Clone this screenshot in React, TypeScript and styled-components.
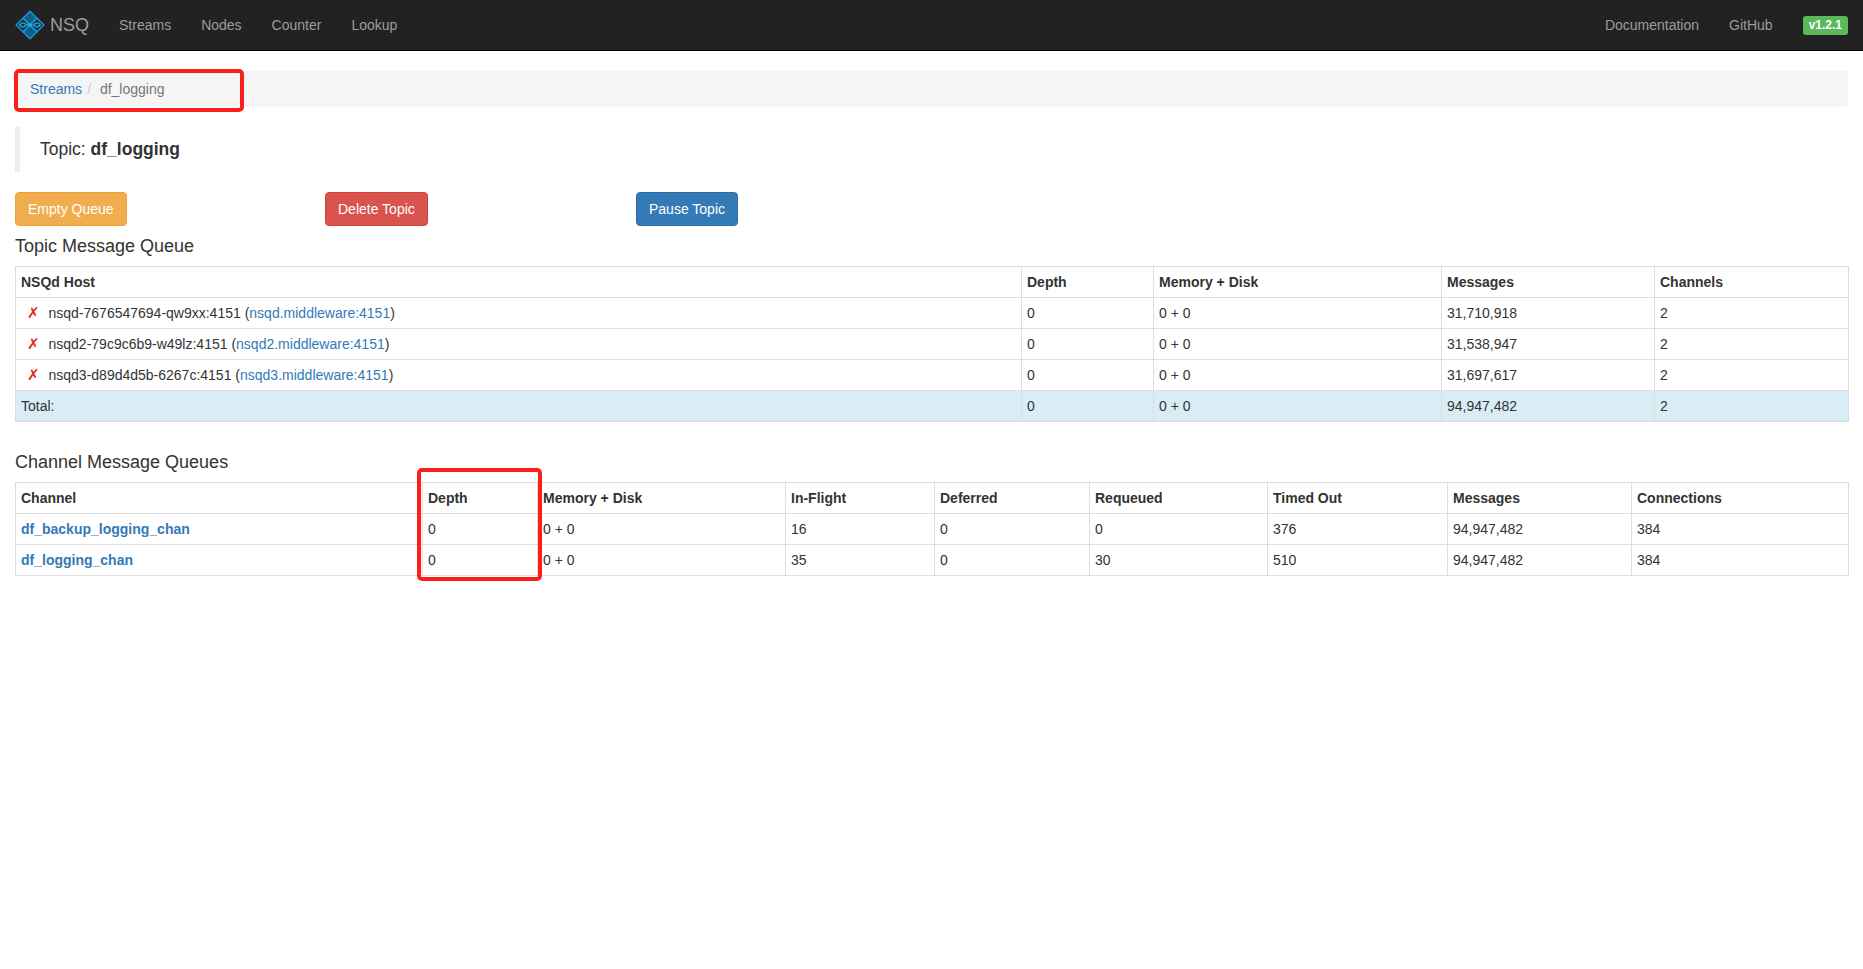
import styled, { createGlobalStyle } from "styled-components";

const GlobalStyle = createGlobalStyle`
  * {
    box-sizing: border-box;
  }
  body {
    margin: 0;
    background: #fff;
    color: #333;
    font-family: "Liberation Sans", Arial, sans-serif;
    font-size: 14px;
    line-height: 20px;
  }
`;

const Page = styled.div`
  position: relative;
  min-height: 969px;
`;

const Navbar = styled.nav`
  display: flex;
  justify-content: space-between;
  height: 51px;
  margin-bottom: 20px;
  padding: 0 15px;
  background: #222;
  border-bottom: 1px solid #080808;
`;

const NavGroup = styled.div`
  display: flex;
  align-items: center;
`;

const Brand = styled.a`
  display: flex;
  align-items: center;
  gap: 5px;
  margin-right: 15px;
  color: #9d9d9d;
  font-size: 18px;
`;

const NavLink = styled.a`
  padding: 15px;
  color: #9d9d9d;
`;

const VersionLabel = styled.span`
  margin-left: 15px;
  padding: 3px 6px 4px;
  border-radius: 3px;
  background: #5cb85c;
  color: #fff;
  font-size: 12px;
  font-weight: 700;
  line-height: 12px;
`;

const Content = styled.main`
  padding: 0 15px;
`;

const Breadcrumb = styled.ol`
  display: flex;
  margin: 0 0 20px;
  padding: 8px 15px;
  border-radius: 4px;
  background: #f5f5f5;
  list-style: none;
`;

const Crumb = styled.li`
  color: #777;
`;

const CrumbLink = styled.a`
  color: #337ab7;
`;

const CrumbSeparator = styled.span`
  padding: 0 5px;
  color: #ccc;
`;

const TopicQuote = styled.blockquote`
  margin: 0 0 20px;
  padding: 10px 20px;
  border-left: 5px solid #eee;
  font-size: 17.5px;
  line-height: 25px;
`;

const ActionRow = styled.div`
  display: grid;
  grid-template-columns: 310px 311px repeat(4, 1fr);
`;

const ActionCell = styled.div`
  display: flex;
  align-items: flex-start;
`;

const Button = styled.button<{ $bg: string; $border: string }>`
  height: 34px;
  padding: 6px 12px;
  border: 1px solid ${(p) => p.$border};
  border-radius: 4px;
  background: ${(p) => p.$bg};
  color: #fff;
  font-family: inherit;
  font-size: 14px;
  line-height: 20px;
`;

const SectionTitle = styled.h4<{ $spaced?: boolean }>`
  margin: 10px 0;
  padding-top: ${(p) => (p.$spaced ? "10px" : "0")};
  color: #333;
  font-size: 18px;
  font-weight: 500;
  line-height: 20px;
`;

const Table = styled.table`
  width: 100%;
  margin-bottom: 20px;
  border-collapse: collapse;
  border-spacing: 0;
  table-layout: fixed;
`;

const HeadCell = styled.th`
  padding: 5px;
  border: 1px solid #ddd;
  text-align: left;
  font-weight: 700;
`;

const Cell = styled.td<{ $info?: boolean }>`
  padding: 5px;
  border: 1px solid #ddd;
  background: ${(p) => (p.$info ? "#d9edf7" : "transparent")};
`;

const Tombstone = styled.span`
  display: inline-block;
  width: 27.5px;
  padding-left: 6px;
  color: #e02a10;
  font-family: "DejaVu Sans", sans-serif;
  font-size: 15px;
  line-height: 18px;
`;

const HostLink = styled.a`
  color: #337ab7;
`;

const ChannelLink = styled.a`
  color: #337ab7;
  font-weight: 700;
`;

const Callout = styled.div<{ $x: number; $y: number; $w: number; $h: number }>`
  position: absolute;
  left: ${(p) => p.$x}px;
  top: ${(p) => p.$y}px;
  width: ${(p) => p.$w}px;
  height: ${(p) => p.$h}px;
  border: 4px solid #fb1f1a;
  border-radius: 5px;
  pointer-events: none;
`;

const Logo = () => (
  <svg width="30" height="30" viewBox="0 0 30 30" fill="none">
    <g fill="#0e5f8a" stroke="#1a94cc" strokeWidth="1.5" strokeLinejoin="round">
      <path d="M15 1.2 L21.8 8 L15 14.8 L8.2 8 Z" />
      <path d="M15 15.2 L21.8 22 L15 28.8 L8.2 22 Z" />
      <path d="M8 8.2 L14.8 15 L8 21.8 L1.2 15 Z" fill="#123246" />
      <path d="M22 8.2 L28.8 15 L22 21.8 L15.2 15 Z" fill="#123246" />
    </g>
    <path d="M4 15 H26" stroke="#22a6e0" strokeWidth="1.4" />
    <g fill="#1b2b35" stroke="#22a6e0" strokeWidth="1.3">
      <ellipse cx="8" cy="15" rx="2.6" ry="1.8" />
      <ellipse cx="22" cy="15" rx="2.6" ry="1.8" />
    </g>
    <circle cx="15" cy="15" r="1.7" fill="#28b0ea" />
  </svg>
);

const hosts = [
  { name: "nsqd-7676547694-qw9xx:4151", link: "nsqd.middleware:4151", messages: "31,710,918" },
  { name: "nsqd2-79c9c6b9-w49lz:4151", link: "nsqd2.middleware:4151", messages: "31,538,947" },
  { name: "nsqd3-d89d4d5b-6267c:4151", link: "nsqd3.middleware:4151", messages: "31,697,617" },
];

const channels = [
  { name: "df_backup_logging_chan", inFlight: "16", requeued: "0", timedOut: "376" },
  { name: "df_logging_chan", inFlight: "35", requeued: "30", timedOut: "510" },
];

const topicCols = [1006, 132, 288, 213, 194];
const topicHead = ["NSQd Host", "Depth", "Memory + Disk", "Messages", "Channels"];
const channelCols = [407, 115, 248, 149, 155, 178, 180, 184, 217];
const channelHead = [
  "Channel",
  "Depth",
  "Memory + Disk",
  "In-Flight",
  "Deferred",
  "Requeued",
  "Timed Out",
  "Messages",
  "Connections",
];

export default function App() {
  return (
    <Page>
      <GlobalStyle />
      <Navbar>
        <NavGroup>
          <Brand>
            <Logo />
            NSQ
          </Brand>
          <NavLink>Streams</NavLink>
          <NavLink>Nodes</NavLink>
          <NavLink>Counter</NavLink>
          <NavLink>Lookup</NavLink>
        </NavGroup>
        <NavGroup>
          <NavLink>Documentation</NavLink>
          <NavLink>GitHub</NavLink>
          <VersionLabel>v1.2.1</VersionLabel>
        </NavGroup>
      </Navbar>
      <Content>
        <Breadcrumb>
          <Crumb>
            <CrumbLink>Streams</CrumbLink>
            <CrumbSeparator>/</CrumbSeparator>
          </Crumb>
          <Crumb>&nbsp;df_logging</Crumb>
        </Breadcrumb>
        <TopicQuote>
          Topic: <strong>df_logging</strong>
        </TopicQuote>
        <ActionRow>
          <ActionCell>
            <Button $bg="#f0ad4e" $border="#eea236">Empty Queue</Button>
          </ActionCell>
          <ActionCell>
            <Button $bg="#d9534f" $border="#d43f3a">Delete Topic</Button>
          </ActionCell>
          <ActionCell>
            <Button $bg="#337ab7" $border="#2e6da4">Pause Topic</Button>
          </ActionCell>
        </ActionRow>
        <SectionTitle>Topic Message Queue</SectionTitle>
        <Table>
          <colgroup>
            {topicCols.map((w, i) => (
              <col key={i} width={w} />
            ))}
          </colgroup>
          <thead>
            <tr>
              {topicHead.map((h) => (
                <HeadCell key={h}>{h}</HeadCell>
              ))}
            </tr>
          </thead>
          <tbody>
            {hosts.map((h) => (
              <tr key={h.name}>
                <Cell>
                  <Tombstone>✗</Tombstone>
                  {h.name} (<HostLink>{h.link}</HostLink>)
                </Cell>
                <Cell>0</Cell>
                <Cell>0 + 0</Cell>
                <Cell>{h.messages}</Cell>
                <Cell>2</Cell>
              </tr>
            ))}
            <tr>
              <Cell $info>Total:</Cell>
              <Cell $info>0</Cell>
              <Cell $info>0 + 0</Cell>
              <Cell $info>94,947,482</Cell>
              <Cell $info>2</Cell>
            </tr>
          </tbody>
        </Table>
        <SectionTitle $spaced>Channel Message Queues</SectionTitle>
        <Table>
          <colgroup>
            {channelCols.map((w, i) => (
              <col key={i} width={w} />
            ))}
          </colgroup>
          <thead>
            <tr>
              {channelHead.map((h) => (
                <HeadCell key={h}>{h}</HeadCell>
              ))}
            </tr>
          </thead>
          <tbody>
            {channels.map((c) => (
              <tr key={c.name}>
                <Cell>
                  <ChannelLink>{c.name}</ChannelLink>
                </Cell>
                <Cell>0</Cell>
                <Cell>0 + 0</Cell>
                <Cell>{c.inFlight}</Cell>
                <Cell>0</Cell>
                <Cell>{c.requeued}</Cell>
                <Cell>{c.timedOut}</Cell>
                <Cell>94,947,482</Cell>
                <Cell>384</Cell>
              </tr>
            ))}
          </tbody>
        </Table>
      </Content>
      <Callout $x={14} $y={69} $w={230} $h={43} />
      <Callout $x={417} $y={468} $w={125} $h={113} />
    </Page>
  );
}
